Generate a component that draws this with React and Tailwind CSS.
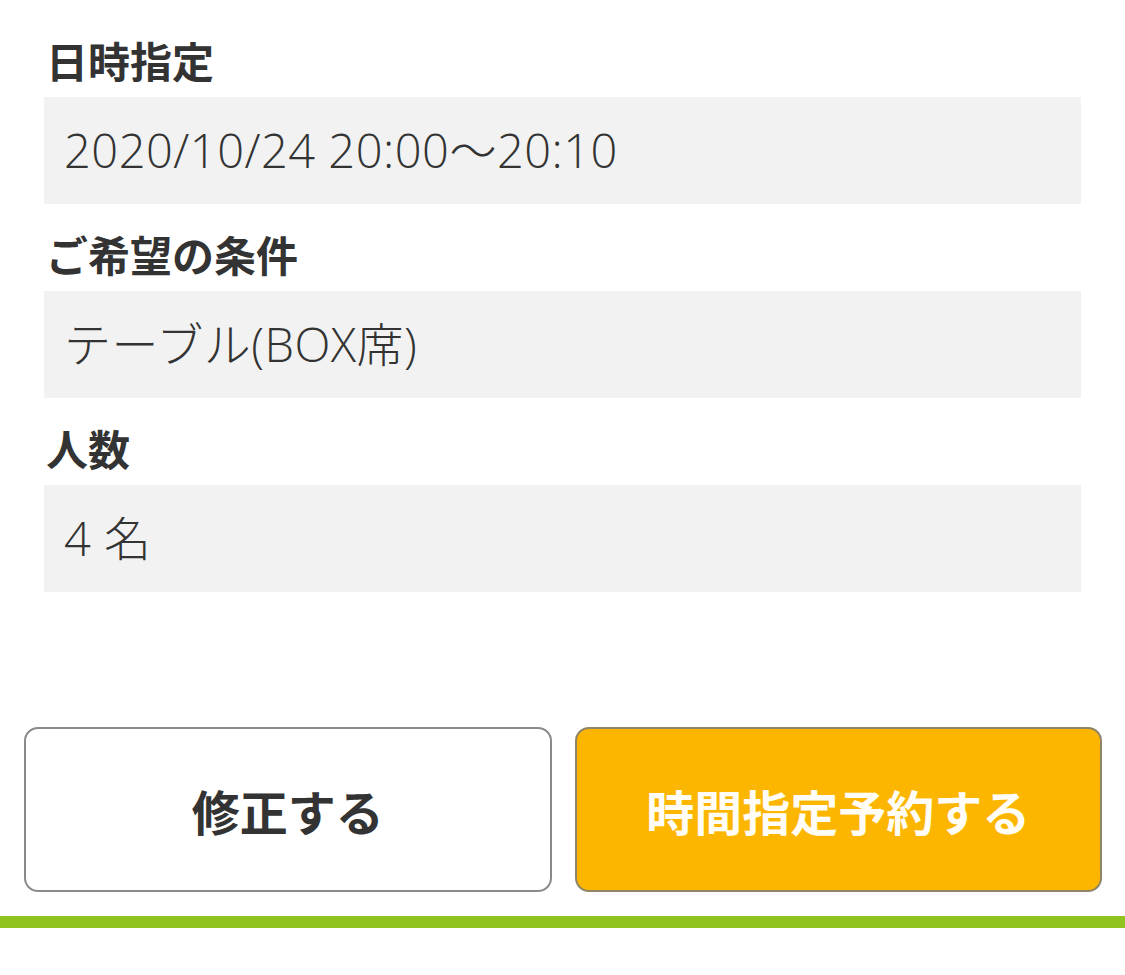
export default function App() {
  const rows = [
    { label: '日時指定', value: '2020/10/24 20:00～20:10' },
    { label: 'ご希望の条件', value: 'テーブル(BOX席)' },
    { label: '人数', value: '4 名' },
  ];

  return (
    <div
      className="w-[1125px] h-[975px] bg-white text-[#333333] overflow-hidden"
      style={{ fontFamily: '"Noto Sans CJK JP", "Noto Sans", sans-serif' }}
    >
      <div className="px-[44px] pt-[32px] flex flex-col gap-[22px]">
        {rows.map((r) => (
          <section key={r.label}>
            <h2 className="h-[56px] leading-[56px] mb-[9px] pl-[2px] text-[42px] font-bold">
              {r.label}
            </h2>
            <div className="h-[107px] bg-[#f2f2f2] flex items-center px-[20px] text-[47px] tracking-[0.5px] font-light font-['Open_Sans','Noto_Sans_CJK_JP',sans-serif]">
              {r.value}
            </div>
          </section>
        ))}
      </div>

      <div className="mt-[135px] pl-[24px] pr-[23px] flex gap-[23px]">
        <button className="flex-1 h-[165px] rounded-[14px] border-[2.5px] border-[#8a8a8a] bg-white text-[48px] font-bold text-[#333333]">
          修正する
        </button>
        <button className="flex-1 h-[165px] rounded-[14px] border-[2.5px] border-[#8f8468] bg-[#fdb600] text-[48px] font-bold text-[#fffdf5]">
          時間指定予約する
        </button>
      </div>

      <div className="mt-[24px] h-[12px] bg-[#8fc31f]" />
    </div>
  );
}
